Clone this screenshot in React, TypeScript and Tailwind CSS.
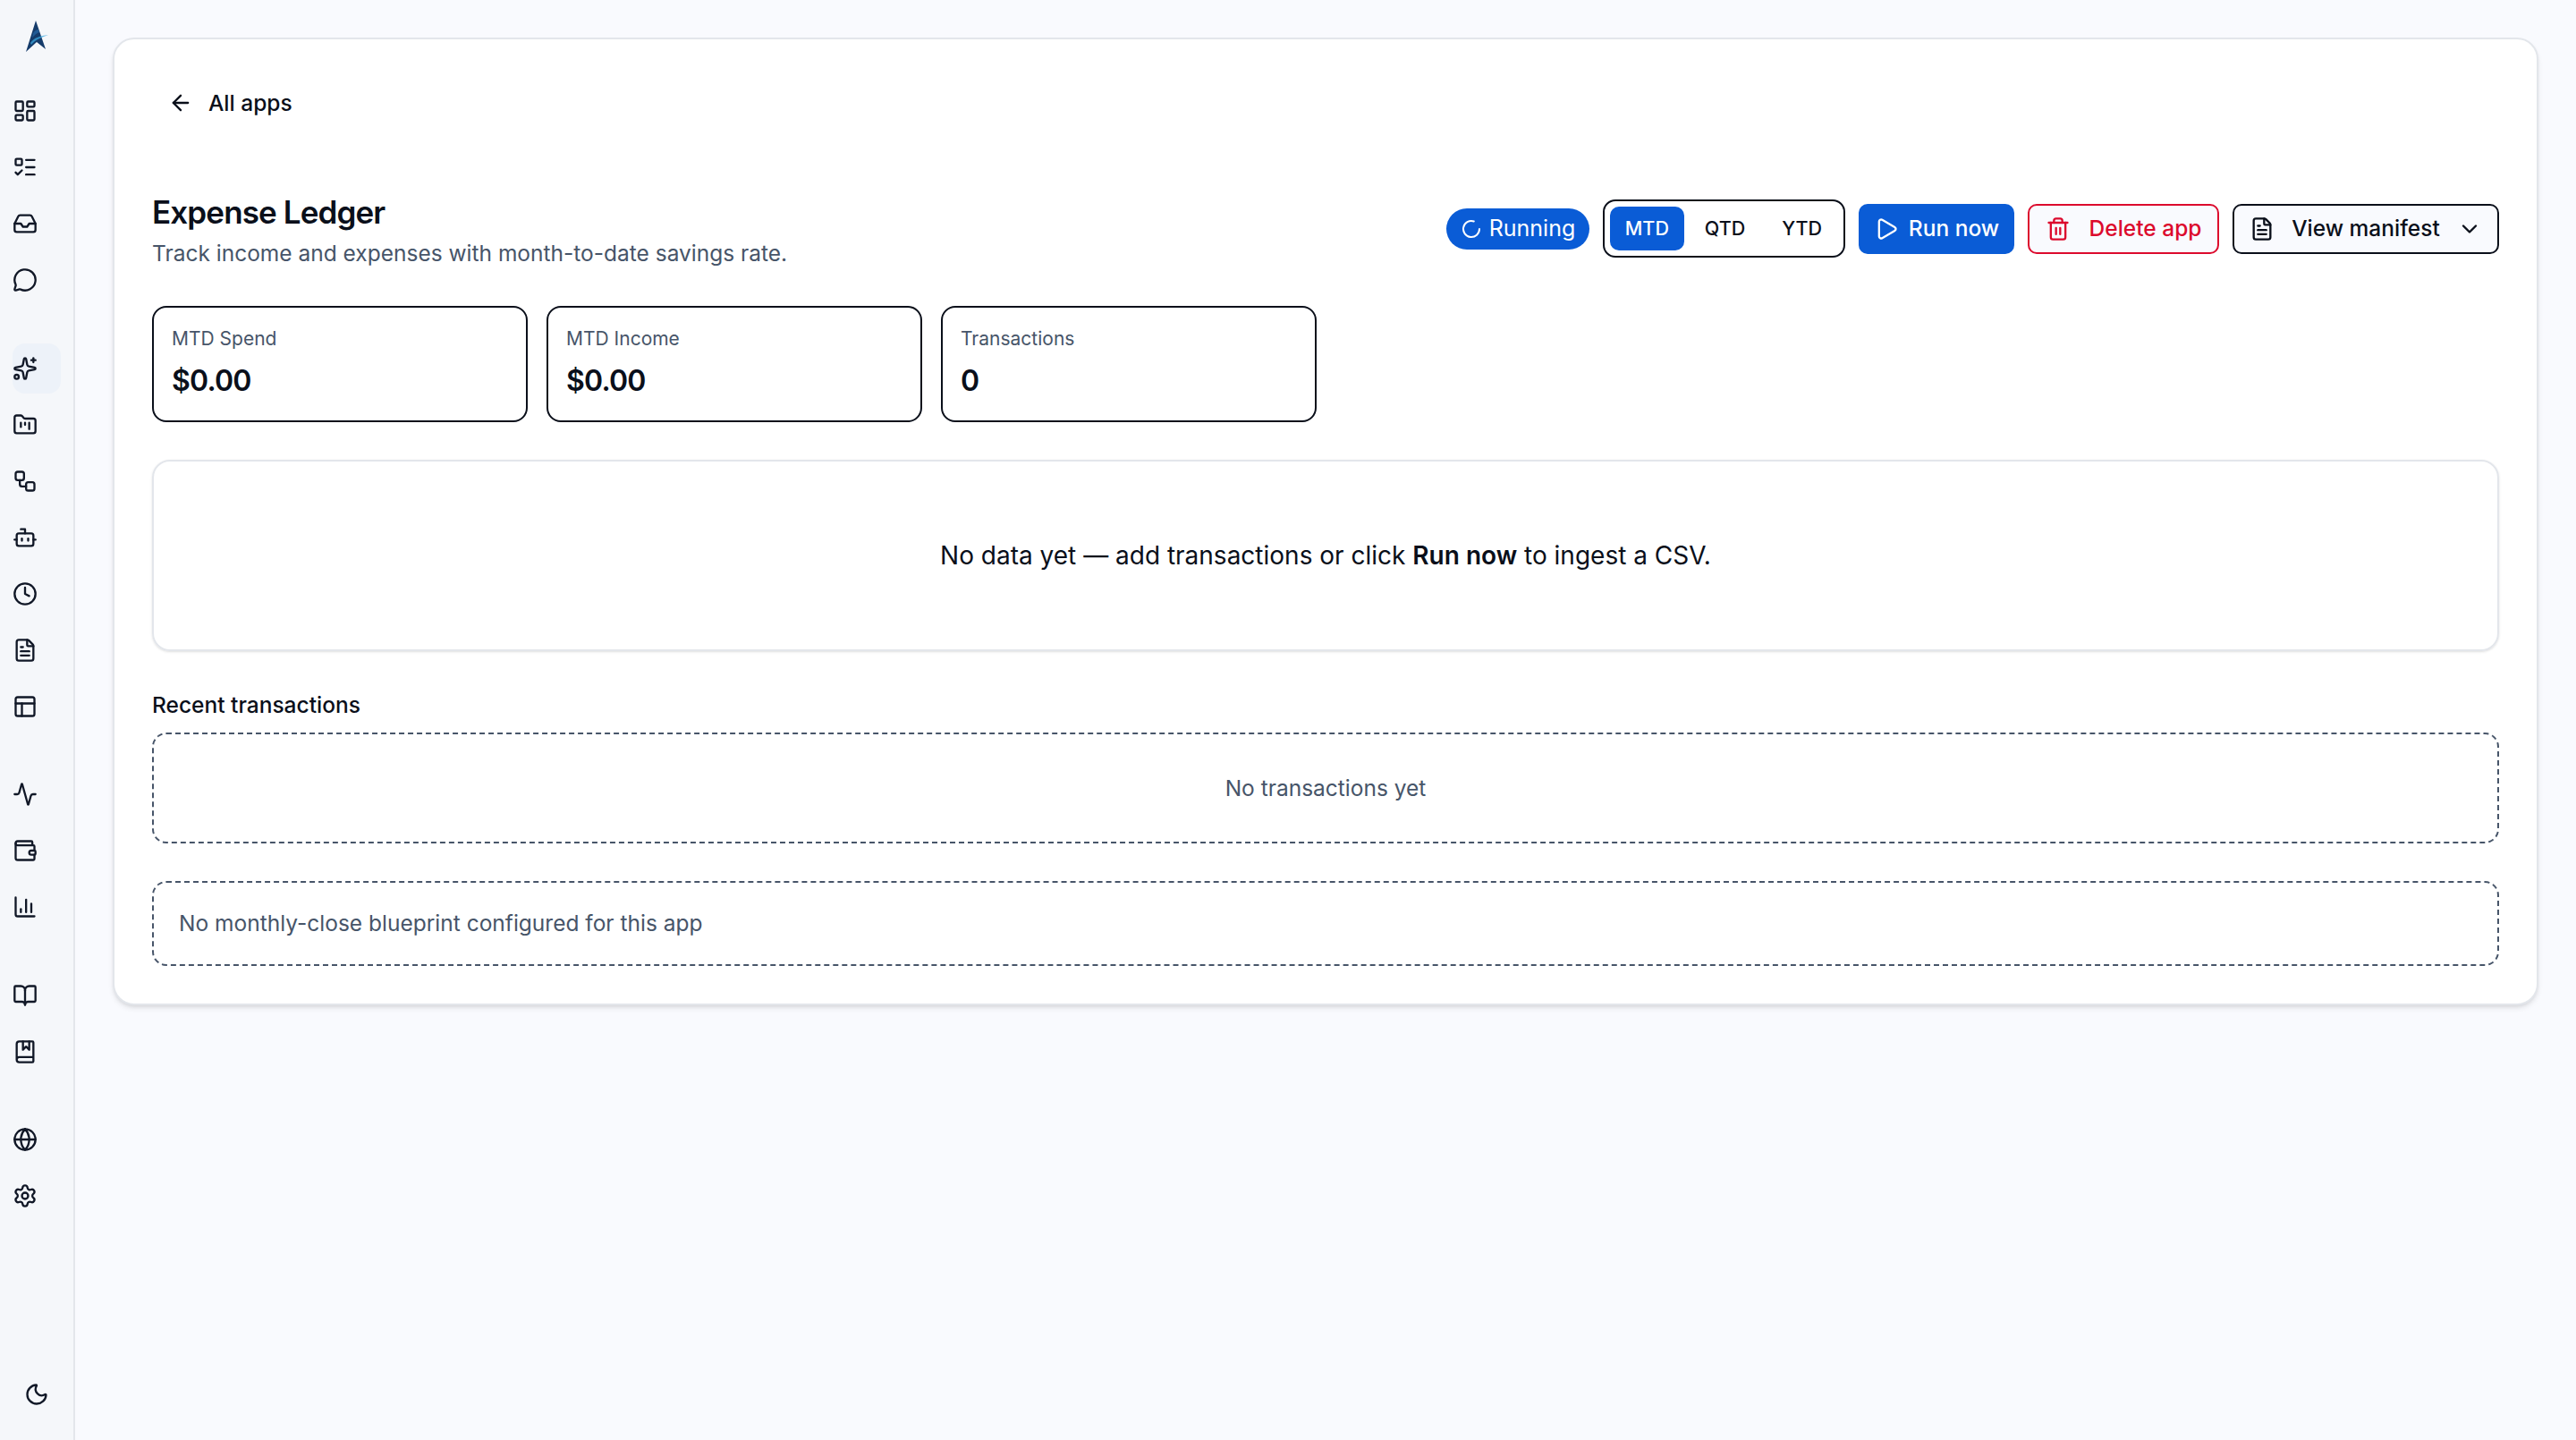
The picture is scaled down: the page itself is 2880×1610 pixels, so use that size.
import React, { type ReactNode } from 'react';
import {
  Activity,
  ArrowLeft,
  BookMarked,
  BookOpen,
  Bot,
  ChartColumn,
  ChevronDown,
  Clock,
  FileText,
  FolderKanban,
  Globe,
  Inbox,
  LayoutDashboard,
  ListTodo,
  LoaderCircle,
  MessageCircle,
  Moon,
  PanelsTopLeft,
  Play,
  Settings,
  Sparkles,
  Trash2,
  Wallet,
  Workflow,
  type LucideIcon
} from 'lucide-react';

const FONT = 'font-["Inter","Liberation_Sans",sans-serif]';

function Logo() {
  return (
    <svg width="28" height="37" viewBox="0 0 28 37" fill="none">
      <defs>
        <linearGradient id="logoFill" x1="4" y1="36" x2="18" y2="4">
          <stop offset="0" stopColor="#0a2140" />
          <stop offset="0.6" stopColor="#10325c" />
          <stop offset="1" stopColor="#173f70" />
        </linearGradient>
      </defs>
      <path d="M13 1 L24 33 L14 25 L2 36 Z" fill="url(#logoFill)" />
      <path d="M7 26 C11 20 18 18 27 17 C20 19.500 13 22 8 28 Z" fill="#3aa6dc" opacity="0.75" />
      <path d="M10 15 C12 12 14 11 16 11 L17 14 C14 15 12 17 9 20 Z" fill="#2a6fb0" opacity="0.6" />
    </svg>
  );
}

const NAV_GROUPS: LucideIcon[][] = [
  [LayoutDashboard, ListTodo, Inbox, MessageCircle],
  [Sparkles, FolderKanban, Workflow, Bot, Clock, FileText, PanelsTopLeft],
  [Activity, Wallet, ChartColumn],
  [BookOpen, BookMarked],
  [Globe, Settings]
];

function NavItem(props: { icon: LucideIcon; active?: boolean }) {
  const Icon = props.icon;
  return (
    <div className={`flex h-[56px] w-[54px] items-center rounded-[14px] ${props.active ? 'bg-[#edf2f9]' : ''}`}>
      <Icon size={28} className="text-[#111827]" />
    </div>
  );
}

function Sidebar() {
  return (
    <aside className="flex h-full w-[84px] shrink-0 flex-col border-r-2 border-[#e3e6eb] bg-[#f5f7fa] pl-[14px]">
      <div className="flex h-[67px] items-center pt-[14px] pl-[13px]">
        <Logo />
      </div>
      <nav className="mt-[29px] flex flex-col gap-[42.500px]">
        {NAV_GROUPS.map((group, i) => (
          <div key={i} className="flex flex-col gap-[7px]">
            {group.map((icon, j) => (
              <NavItem key={j} icon={icon} active={i === 1 && j === 0} />
            ))}
          </div>
        ))}
      </nav>
      <div className="mt-auto mb-[37px] pl-[13px]">
        <Moon size={28} className="text-[#111827]" />
      </div>
    </aside>
  );
}

function Stat(props: { label: string; value: string }) {
  return (
    <div className="h-[130px] w-[420px] rounded-[16px] border-2 border-[#0a0f1a] px-[20px] pt-[19px]">
      <div className="text-[21px] leading-[32px] text-[#475569]">{props.label}</div>
      <div className="mt-[7px] text-[32px] leading-[48px] font-semibold tracking-tight text-[#0a0f1a]">{props.value}</div>
    </div>
  );
}

function Dashed(props: { children: ReactNode; className?: string }) {
  return (
    <div className={`rounded-[16px] border-2 border-dashed border-[#475569] text-[24.5px] text-[#475569] ${props.className ?? ''}`}>
      {props.children}
    </div>
  );
}

function HeaderActions() {
  return (
    <div className="flex items-center gap-[15px] pt-[9px]">
      <div className="flex h-[46px] w-[160px] items-center justify-center gap-[8px] rounded-full bg-[#0a5cd6] text-[25px] text-white">
        <LoaderCircle size={24} />
        Running
      </div>
      <div className="flex h-[65px] w-[271px] items-center gap-0 rounded-[14px] border-2 border-[#0a0f1a] bg-white px-[6px]">
        <div className="flex h-[49px] w-[83px] items-center justify-center rounded-[10px] bg-[#0a5cd6] text-[21.5px] font-medium text-white">MTD</div>
        <div className="flex h-[49px] w-[92px] items-center justify-center text-[21.5px] font-medium text-[#0a0f1a]">QTD</div>
        <div className="flex h-[49px] w-[81px] items-center justify-center text-[21.5px] font-medium text-[#0a0f1a]">YTD</div>
      </div>
      <div className="flex h-[56px] w-[174px] items-center justify-center gap-[11px] rounded-[10px] bg-[#0a5cd6] text-[24.5px] font-medium text-white">
        <Play size={28} />
        Run now
      </div>
      <div className="flex h-[56px] w-[214px] items-center justify-center gap-[21px] rounded-[10px] border-2 border-[#dc0a2d] bg-[#f9fafe] text-[24.5px] font-medium text-[#dc0a2d]">
        <Trash2 size={28} />
        Delete app
      </div>
      <div className="flex h-[56px] w-[298px] items-center justify-center gap-[19px] rounded-[10px] border-2 border-[#0a0f1a] bg-[#f9fafe] text-[24.5px] font-medium text-[#0a0f1a]">
        <FileText size={28} />
        View manifest
        <ChevronDown size={28} />
      </div>
    </div>
  );
}

export default function App() {
  return (
    <div className={`flex h-[1610px] w-[2880px] bg-[#f9fafe] ${FONT}`}>
      <Sidebar />
      <main className="min-w-0 flex-1 px-[42px] pt-[42px]">
        <div className="h-[1082px] rounded-[24px] border-2 border-[#e3e6eb] bg-white px-[42px] shadow-md">
          <div className="h-[170px] pt-[53px] pl-[18px]">
            <div className="flex h-[36px] items-center">
              <ArrowLeft size={28} className="text-[#0a0f1a]" />
              <span className="ml-[17px] text-[24.5px] font-medium text-[#0a0f1a]">All apps</span>
            </div>
          </div>
          <div className="flex items-start justify-between">
            <div>
              <h1 className="text-[35px] leading-[46px] font-semibold tracking-tight text-[#0a0f1a]">Expense Ledger</h1>
              <p className="mt-[4px] text-[24.5px] leading-[38px] text-[#475569]">Track income and expenses with month-to-date savings rate.</p>
            </div>
            <HeaderActions />
          </div>
          <div className="mt-[40px] flex gap-[21px]">
            <Stat label="MTD Spend" value="$0.00" />
            <Stat label="MTD Income" value="$0.00" />
            <Stat label="Transactions" value="0" />
          </div>
          <div className="mt-[42px] flex h-[214px] items-center justify-center rounded-[20px] border-2 border-[#e3e6eb] text-[28px] text-[#0a0f1a] shadow-sm">
            <span>
              No data yet — add transactions or click <strong className="font-semibold">Run now</strong> to ingest a CSV.
            </span>
          </div>
          <div className="mt-[42px] text-[24.5px] leading-[36px] font-medium text-[#0a0f1a]">Recent transactions</div>
          <Dashed className="mt-[13px] flex h-[124px] items-center justify-center">No transactions yet</Dashed>
          <Dashed className="mt-[42px] flex h-[95px] items-center px-[28px]">No monthly-close blueprint configured for this app</Dashed>
        </div>
      </main>
    </div>
  );
}
